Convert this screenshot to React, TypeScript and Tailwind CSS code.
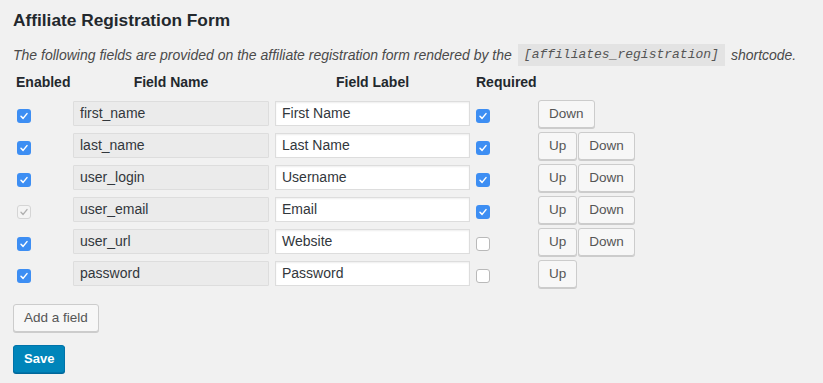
import React from "react";

type Row = {
  name: string;
  label: string;
  enabled: boolean;
  enabledDisabled?: boolean;
  required: boolean;
  up: boolean;
  down: boolean;
};

const rows: Row[] = [
  { name: "first_name", label: "First Name", enabled: true, required: true, up: false, down: true },
  { name: "last_name", label: "Last Name", enabled: true, required: true, up: true, down: true },
  { name: "user_login", label: "Username", enabled: true, required: true, up: true, down: true },
  { name: "user_email", label: "Email", enabled: true, enabledDisabled: true, required: true, up: true, down: true },
  { name: "user_url", label: "Website", enabled: true, required: false, up: true, down: true },
  { name: "password", label: "Password", enabled: true, required: false, up: true, down: false },
];

function Check({ checked, disabled }: { checked: boolean; disabled?: boolean }) {
  if (disabled) {
    return (
      <span className="flex h-[14px] w-[14px] items-center justify-center rounded-[3px] border border-[#d5d5d5] bg-[#f4f4f4]">
        <svg width="10" height="10" viewBox="0 0 10 10">
          <path d="M2 5.3 L4.1 7.4 L8 2.6" fill="none" stroke="#b0b0b0" strokeWidth="1.4" strokeLinecap="round" strokeLinejoin="round" />
        </svg>
      </span>
    );
  }
  if (checked) {
    return (
      <span className="flex h-[14px] w-[14px] items-center justify-center rounded-[3px] bg-[#3d8ef3]">
        <svg width="10" height="10" viewBox="0 0 10 10">
          <path d="M2 5.3 L4.1 7.4 L8 2.6" fill="none" stroke="#ffffff" strokeWidth="1.5" strokeLinecap="round" strokeLinejoin="round" />
        </svg>
      </span>
    );
  }
  return <span className="block h-[14px] w-[14px] rounded-[3px] border border-[#b9b9b9] bg-white" />;
}

function Btn({ children }: { children: React.ReactNode }) {
  return (
    <span className="flex h-[28px] items-center rounded-[3px] border border-[#cccccc] bg-[#f7f7f7] px-[10px] text-[13.5px] text-[#555555] shadow-[0_1px_0_#cccccc]">
      {children}
    </span>
  );
}

export default function App() {
  return (
    <div className="min-h-screen bg-[#f1f1f1] pl-[13px] pt-[8px] font-['Liberation_Sans',Arial,sans-serif] text-[#23282d]">
      <h2 className="h-[24px] text-[17.3px] font-bold leading-[24px] text-[#23282d]">Affiliate Registration Form</h2>
      <div className="mt-[12px] flex h-[22px] items-center text-[14px] italic leading-[22px] text-[#4a4a4a]">
        <span>The following fields are provided on the affiliate registration form rendered by the</span>
        <span className="mx-[6px] flex h-[22px] items-center bg-[#e3e3e3] px-[6px] font-['Liberation_Mono',monospace] text-[13px] italic text-[#555555]">
          [affiliates_registration]
        </span>
        <span>shortcode.</span>
      </div>

      <div className="mt-[6px] flex h-[20px] items-center text-[14px] font-bold leading-[20px] text-[#23282d]">
        <span className="w-[60px] pl-[3px]">Enabled</span>
        <span className="w-[196px] text-center">Field Name</span>
        <span className="ml-[6px] w-[195px] text-center">Field Label</span>
        <span className="ml-[6px]">Required</span>
      </div>

      <div className="mt-[8px] flex flex-col">
        {rows.map((r) => (
          <div key={r.name} className="flex h-[32px] items-start">
            <div className="w-[60px] pl-[4px] pt-[9px]">
              <Check checked={r.enabled} disabled={r.enabledDisabled} />
            </div>
            <div className="mt-[1px] flex h-[25px] w-[196px] items-center rounded-[1px] border border-[#dddddd] bg-[#ebebeb] pl-[6px] text-[14px] text-[#32373c]">
              {r.name}
            </div>
            <div className="ml-[6px] mt-[1px] flex h-[25px] w-[195px] items-center border border-[#dddddd] bg-white pl-[6px] text-[14px] text-[#32373c] shadow-[inset_0_1px_2px_rgba(0,0,0,0.07)]">
              {r.label}
            </div>
            <div className="ml-[6px] w-[62px] pt-[9px]">
              <Check checked={r.required} />
            </div>
            <div className="flex gap-[1px]">
              {r.up && <Btn>Up</Btn>}
              {r.down && <Btn>Down</Btn>}
            </div>
          </div>
        ))}
      </div>

      <div className="mt-[12px] flex">
        <Btn>Add a field</Btn>
      </div>
      <div className="mt-[13px] flex">
        <span className="flex h-[28px] items-center rounded-[3px] border border-[#0073aa] bg-[#0085ba] px-[10px] text-[13px] font-bold text-white shadow-[0_1px_0_#006799]">
          Save
        </span>
      </div>
    </div>
  );
}
